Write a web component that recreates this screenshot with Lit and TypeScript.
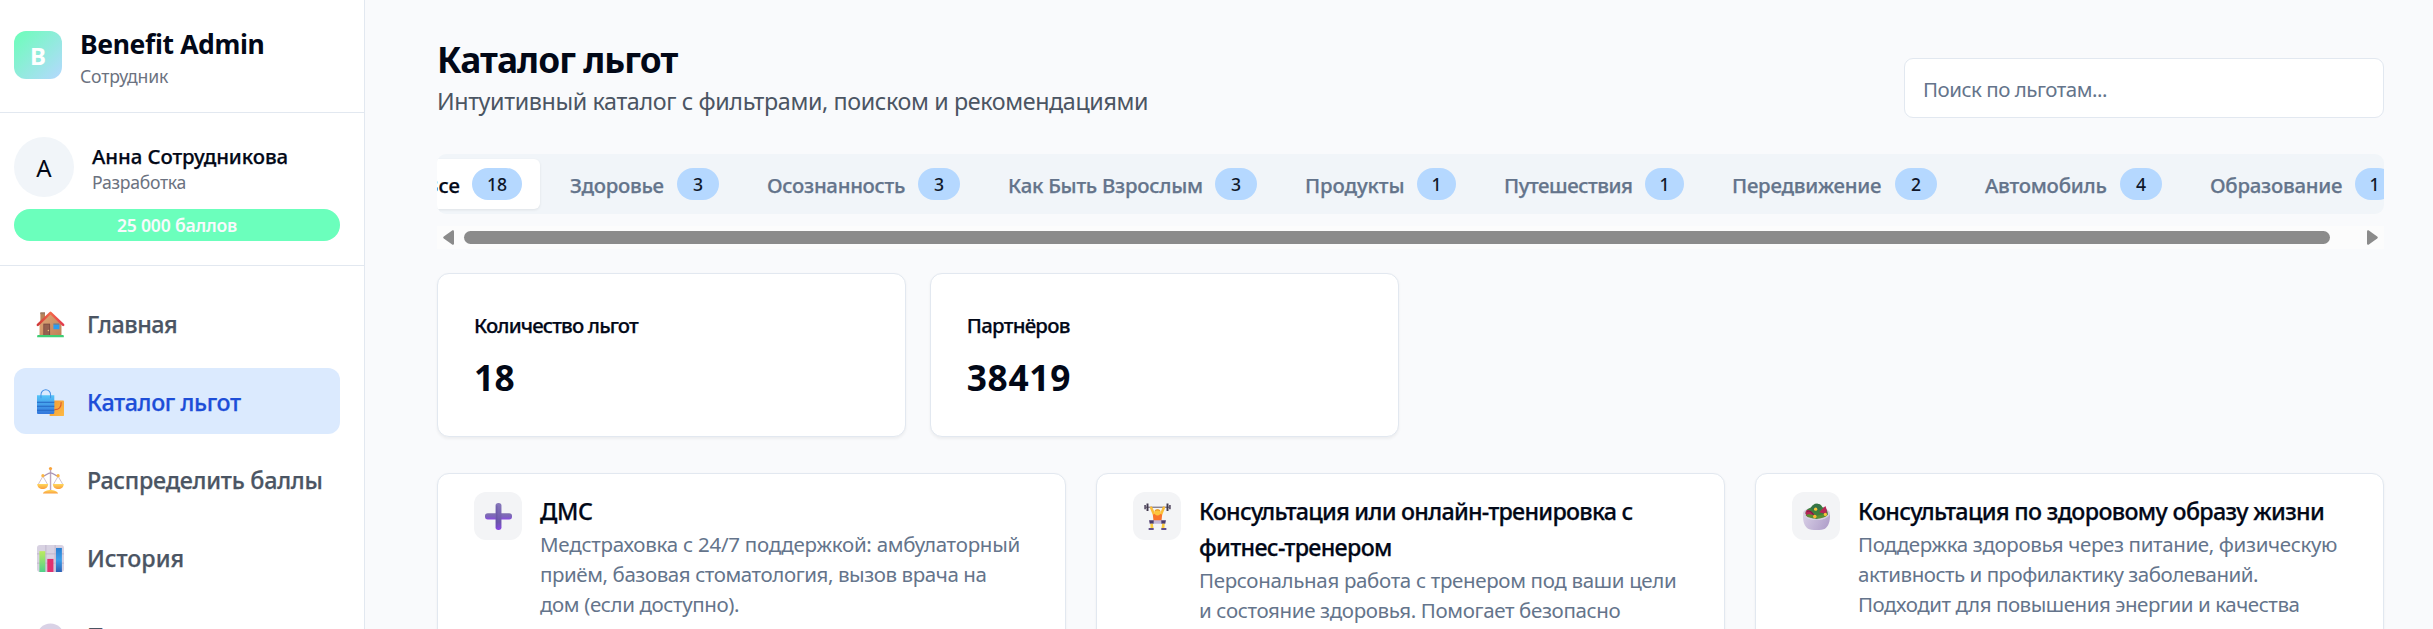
import { LitElement, html, css, svg, nothing } from "lit";
import { customElement, property } from "lit/decorators.js";
import { styleMap } from "lit/directives/style-map.js";

const FAMILY = '"Noto Sans", "Open Sans", sans-serif';
const pen = document.createElement("canvas").getContext("2d")!;

/** Letter spacing that sets a line of text to the given ink width. */
function tracking(text: string, weight: number, size: number, width: number) {
  pen.font = `${weight} ${size}px ${FAMILY}`;
  const m = pen.measureText(text);
  const natural = m.actualBoundingBoxLeft + m.actualBoundingBoxRight;
  return `${((width - natural) / (text.length - 1)).toFixed(3)}px`;
}

@customElement("text-line")
class TextLine extends LitElement {
  static styles = css`
    :host { display: block; white-space: nowrap; }
    .line { display: block; }
    .medium { -webkit-text-stroke: 0.25px currentColor; }
  `;
  @property() text = "";
  @property({ type: Number }) weight = 400;
  @property({ type: Number }) size = 20.5;
  @property({ type: Number }) ink = 0;
  render() {
    return html`<span
      class="line ${this.weight === 500 ? "medium" : ""}"
      style=${styleMap({
        fontWeight: String(this.weight),
        fontSize: `${this.size}px`,
        letterSpacing: this.ink ? tracking(this.text, this.weight, this.size, this.ink) : "normal",
      })}
    >${this.text}</span>`;
  }
}

const line = (cls: string, text: string, weight: number, size: number, ink: number) =>
  html`<text-line class=${cls} .text=${text} .weight=${weight} .size=${size} .ink=${ink}></text-line>`;

const icons: Record<string, unknown> = {
  house: svg`
    <defs><linearGradient id="hw" x1="0" x2="1" y2="1"><stop stop-color="#e0aa79"/><stop offset="1" stop-color="#bf7f56"/></linearGradient>
    <linearGradient id="hr" x1="0" x2="1"><stop stop-color="#cf3838"/><stop offset=".5" stop-color="#f4694a"/><stop offset="1" stop-color="#e2394c"/></linearGradient></defs>
    <path d="M4 2.2h5.5v12H4z" fill="#b98359"/><path d="M4 1.5h5.5v2.3H4z" fill="#9c7a62"/>
    <path d="M3 14.5 16 3l13 11.5V30H3z" fill="url(#hw)"/>
    <path d="M7.5 15h8v15h-8z" fill="#7c4b42"/><path d="M8.5 16h6v13h-6z" fill="#95604f"/><circle cx="13.5" cy="23" r=".9" fill="#f2c27b"/>
    <path d="M19.5 15h7v6.6h-7z" fill="#2b9df0"/><path d="M19.5 15h7v1h-7z" fill="#9a6a4e"/>
    <path d="M1 16.5 16 2.2 31 16.5" fill="none" stroke="url(#hr)" stroke-width="3" stroke-linejoin="round" stroke-linecap="round"/>
    <path d="M1.2 28.5h29.6a1 1 0 0 1 1 1V31H.2v-1.5a1 1 0 0 1 1-1z" fill="#3fce74"/>`,
  bags: svg`
    <defs><linearGradient id="bb" x2="0" y2="1"><stop stop-color="#55c4f8"/><stop offset="1" stop-color="#3377dc"/></linearGradient>
    <linearGradient id="bo" x2="1" y2="1"><stop stop-color="#f29a34"/><stop offset="1" stop-color="#fdb944"/></linearGradient></defs>
    <path d="M15 13.5h16a1 1 0 0 1 1 1V31a1 1 0 0 1-1 1H15z" fill="url(#bo)"/>
    <path d="M28.6 16c.3 6-2.600 8.500-7.600 8.500" fill="none" stroke="#dc5b2e" stroke-width="1.300" stroke-linecap="round"/>
    <path d="M0 7.500h20.500V28a1.500 1.500 0 0 1-1.500 1.500H1.200A1.200 1.200 0 0 1 0 28.300z" fill="url(#bb)"/>
    <path d="M0 15.800h20.500M0 20.500h20.500M0 25.300h20.500" stroke="#2366c4" stroke-width="1.200"/>
    <path d="M4.700 10.500V6.800a5.700 5.900 0 0 1 11.400 0v3.700" fill="none" stroke="#4590e6" stroke-width="1.200" stroke-linecap="round"/>`,
  scales: svg`
    <defs><linearGradient id="sp" x2="0" y2="1"><stop stop-color="#ffd95c"/><stop offset="1" stop-color="#f99d3d"/></linearGradient></defs>
    <path d="M15.200 3h1.700v25h-1.700z" fill="#bba5bd"/>
    <path d="M6.500 10.500c3.500 1 5.500-3.500 9.500-3.500s6 4.500 9.500 3.500" fill="none" stroke="#a993b5" stroke-width="1.600"/>
    <path d="M7 11 1.500 20.500M7 11l5.500 9.500M25 11l-5.500 9.500M25 11l5.500 9.500" stroke="#c7b5c6" stroke-width="1"/>
    <path d="M.3 20h12.900c0 3.600-2.700 6-6.400 6S.3 23.600.3 20zM18.800 20h12.900c0 3.600-2.700 6-6.400 6s-6.500-2.400-6.500-6z" fill="url(#sp)"/>
    <circle cx="16" cy="1.900" r="1.900" fill="#f8a43c"/><circle cx="7" cy="10.300" r="1.900" fill="#fbb542"/><circle cx="25" cy="10.300" r="1.900" fill="#fbb542"/>
    <path d="M7 31.500c.8-2.800 5-4.300 9-4.300s8.200 1.500 9 4.300z" fill="url(#sp)"/>`,
  chart: svg`
    <defs><linearGradient id="cg" x2="0" y2="1"><stop stop-color="#bdea60"/><stop offset="1" stop-color="#4fd18a"/></linearGradient>
    <linearGradient id="cb" x2="0" y2="1"><stop stop-color="#2a7fd2"/><stop offset=".5" stop-color="#3c9fea"/><stop offset="1" stop-color="#2a5fb4"/></linearGradient></defs>
    <rect width="32" height="32" rx="3.500" fill="#d8d2e2"/>
    <path d="M0 10.500h32M0 21.500h32M10.500 0v32M21.500 0v32" stroke="#bcb3c8" stroke-width="1"/>
    <path d="M2.800 7.300h7V32h-7z" fill="url(#cg)"/><path d="M12.200 16.500h7.300V32h-7.300z" fill="#e0306f"/><path d="M22.500 3.500h7V32h-7z" fill="url(#cb)"/>`,
  bubble: svg`<ellipse cx="16" cy="15" rx="15.500" ry="14.300" fill="#d9d2e6"/><path d="M4 22 1 31l10-3z" fill="#d9d2e6"/>`,
  plus: svg`
    <defs><linearGradient id="pl" gradientUnits="userSpaceOnUse" x1="0" x2="0" y1="12" y2="20"><stop stop-color="#8072ae"/><stop offset=".55" stop-color="#7d63bd"/><stop offset="1" stop-color="#8a45e8"/></linearGradient>
    <linearGradient id="pv" gradientUnits="userSpaceOnUse" x1="0" x2="0" y1="0" y2="32"><stop stop-color="#8778bb"/><stop offset=".7" stop-color="#6d57ab"/><stop offset="1" stop-color="#8a45e8"/></linearGradient></defs>
    <rect x="0" y="12" width="32" height="7.500" rx="3.300" fill="url(#pl)"/><rect x="12.500" y="0" width="7" height="32" rx="3.300" fill="url(#pv)"/>
    <path d="M14 3v26" stroke="#6350a0" stroke-width="1.200" opacity=".6"/>`,
  lifter: svg`
    <path d="M2 5h28" stroke="#6b6276" stroke-width="1.300"/>
    <path d="M3 .5h2.300v9H3zM26.700.5H29v9h-2.300z" fill="#433b4f"/><path d="M.3 2.500h2v5h-2zM29.700 2.500h2v5h-2z" fill="#5b5268"/>
    <path d="M8.500 5.500 12.500 15M23.500 5.500 19.500 15" stroke="#fbbd38" stroke-width="3" stroke-linecap="round"/>
    <path d="M10.500 14c2-1.500 9-1.500 11 0l-.8 7.500h-9.400z" fill="#f9742c"/>
    <circle cx="16" cy="11" r="3.700" fill="#fcc63f"/><path d="M12.500 10c.5-3.500 6.500-3.500 7 0-2-1.500-5-1.500-7 0z" fill="#e9952a"/>
    <path d="M10.500 20.500h11l-1.500 4h-8z" fill="#c4b7d6"/>
    <path d="M6 20.500h5.500v4H6.800zM20.500 20.500H26l-.8 4h-4.700z" fill="#4b3a6c"/>
    <path d="M7.500 24.500h3l.7 5H7.800zM21.500 24.500h3l-.3 5h-3.400z" fill="#fcca3e"/>
    <path d="M5.500 29.500h6V32h-6zM20.500 29.500h6V32h-6z" fill="#62508a"/>`,
  salad: svg`
    <defs><linearGradient id="sb" x2="1" y2=".3"><stop stop-color="#d8cfe6"/><stop offset="1" stop-color="#b3a3cc"/></linearGradient></defs>
    <ellipse cx="16" cy="12.500" rx="16" ry="7.500" fill="#d5cee0"/>
    <path d="M3 13C3 7 8 6 10 5c1-5 11-6 13 0 4 0 6.500 4 6.500 9L16 19z" fill="#3f7f3c"/>
    <path d="M9 6c2-3 4-2 5-5 4-1 8 1 8 5-2 4-9 4-13 0z" fill="#347346"/>
    <path d="M3.500 9.500c3-3 7 0 11 6l-8 1.500c-3-1.500-4-4-3-7.500zM19 11l7.500-7.500c1.200 2.500 2.500 6 1 9.500z" fill="#b72556"/>
    <path d="M5 10c3-1.500 6 1 8 5" fill="none" stroke="#7d1c43" stroke-width="1.300"/>
    <path d="M0 13c1 2 2 3 3 3.500 6 4.500 20 4.500 26 0 1-.5 2-1.500 3-3.500.3 10-2 14.500-6 17.500-3 2-17 2-20 0C2 27.500-.3 23 0 13z" fill="url(#sb)"/>
    <path d="M3 14.500c5 5.300 21 5.300 26 0l-4-1.500-9 2-9-2z" fill="#5a8f32"/>
    <circle cx="15" cy="7.300" r="2" fill="#f8c63a"/><circle cx="14" cy="16" r="2.100" fill="#fbb638"/><circle cx="26.500" cy="13.500" r="1.900" fill="#f8c63a"/>`,
};

@customElement("ui-glyph")
class UiGlyph extends LitElement {
  static styles = css`
    :host { display: block; flex: none; width: 27px; height: 27px; }
    svg { display: block; width: 100%; height: 100%; overflow: visible; }
  `;
  @property() name = "";
  render() {
    return html`<svg viewBox="0 0 32 32">${icons[this.name] ?? nothing}</svg>`;
  }
}

const nav: [string, string, number, boolean][] = [
  ["house", "Главная", 87, false],
  ["bags", "Каталог льгот", 152, true],
  ["scales", "Распределить баллы", 232.5, false],
  ["chart", "История", 93.5, false],
  ["bubble", "Поддержка", 122, false],
];

@customElement("side-bar")
class SideBar extends LitElement {
  static styles = css`
    :host { display: block; box-sizing: border-box; width: 365px; flex: none; background: #fff; border-right: 1px solid #e2e8f0; overflow: hidden; }
    .brand { display: flex; gap: 18px; padding: 24px 24px 24px 14px; height: 64px; border-bottom: 1px solid #e2e8f0; }
    .logo { width: 48px; height: 48px; margin-top: 7px; border-radius: 12px; background: linear-gradient(135deg, #6bffb8, #b5d8ff); color: #fff; font-weight: 700; font-size: 24px; line-height: 50px; text-align: center; }
    .name { padding-top: 2px; line-height: 36px; color: #020817; }
    .role { padding-top: 2px; line-height: 24px; color: #6b7280; }
    .profile { padding: 24px 24px 24px 14px; border-bottom: 1px solid #e2e8f0; }
    .who { display: flex; gap: 18px; height: 60px; }
    .avatar { width: 60px; border-radius: 50%; background: #f1f5f9; font-size: 24px; line-height: 62px; text-align: center; color: #020817; }
    .user { padding-top: 4px; line-height: 30px; color: #020817; }
    .dept { line-height: 22px; color: #6b7280; }
    .points { margin-top: 12px; height: 32px; border-radius: 16px; background: #6bffbc; color: #f8fafc; display: flex; justify-content: center; line-height: 32px; }
    nav { display: flex; flex-direction: column; gap: 12px; padding: 24px 24px 0 14px; }
    .item { display: flex; align-items: center; gap: 23px; height: 63px; padding: 3px 0 0 23px; border-radius: 12px; color: #4b5563; line-height: 36px; }
    .item text-line { margin-top: -1px; }
    .active { background: #dbeafe; color: #1d4ed8; }
  `;
  render() {
    return html`
      <div class="brand">
        <div class="logo">B</div>
        <div>${line("name", "Benefit Admin", 700, 26.500, 181.500)}${line("role", "Сотрудник", 400, 17.600, 88)}</div>
      </div>
      <div class="profile">
        <div class="who">
          <div class="avatar">А</div>
          <div>${line("user", "Анна Сотрудникова", 500, 20.400, 194.500)}${line("dept", "Разработка", 400, 17.600, 92.500)}</div>
        </div>
        <div class="points">${line("", "25 000 баллов", 600, 17.600, 120)}</div>
      </div>
      <nav>
        ${nav.map(([icon, text, ink, on]) => html`
          <div class="item ${on ? "active" : ""}"><ui-glyph name=${icon}></ui-glyph>${line("", text, 500, 23.300, ink)}</div>`)}
      </nav>`;
  }
}

/* label, box width, ink width, count, badge width */
const tabs: [string, number, number, number, number][] = [
  ["Все", 35, 33.500, 18, 50],
  ["Здоровье", 95, 93.500, 3, 42],
  ["Осознанность", 139, 137, 3, 42],
  ["Как Быть Взрослым", 195, 193, 3, 42],
  ["Продукты", 100, 97.500, 1, 39],
  ["Путешествия", 129, 127, 1, 39],
  ["Передвижение", 151, 148, 2, 42],
  ["Автомобиль", 123, 121.500, 4, 42],
  ["Образование", 133, 131, 1, 39],
];

@customElement("category-tabs")
class CategoryTabs extends LitElement {
  static styles = css`
    :host { display: block; }
    .bar { height: 60px; border-radius: 9px; background: #f1f5f9; overflow: hidden; }
    .row { display: flex; gap: 12px; align-items: center; height: 60px; margin-left: -30px; }
    .tab { flex: none; display: flex; gap: 12px; align-items: center; height: 50px; padding: 0 18px; border-radius: 6px; color: #64748b; line-height: 30px; }
    .tab text-line { padding-top: 2px; }
    .on { background: #fff; color: #020817; box-shadow: 0 1px 3px rgba(0, 0, 0, 0.08); }
    .count { height: 32px; line-height: 32px; border-radius: 16px; background: #b5d8ff; color: #0f172a; font-size: 17.600px; font-weight: 500; text-align: center; }
    .scroll { display: flex; align-items: center; height: 23px; margin-top: 12px; padding: 0 6px; background: #fcfcfc; }
    .scroll svg { flex: none; width: 11px; height: 15px; fill: #8b8b8b; }
    .thumb { flex: 1; height: 13px; border-radius: 6.500px; background: #8b8b8b; margin: 0 37px 1px 10px; }
  `;
  render() {
    return html`
      <div class="bar"><div class="row">
        ${tabs.map(([t, w, ink, n, bw], i) => html`
          <div class="tab ${i ? "" : "on"}">
            <text-line style=${styleMap({ width: `${w}px` })} .text=${t} .weight=${500} .size=${20.400} .ink=${ink}></text-line>
            <span class="count" style=${styleMap({ width: `${bw}px` })}>${n}</span>
          </div>`)}
      </div></div>
      <div class="scroll">
        <svg viewBox="0 0 11 15"><path d="M9.500.3Q11 0 11 1.500v12q0 1.500-1.500 1.200L.8 8.500q-1.200-1 0-2z"/></svg>
        <div class="thumb"></div>
        <svg viewBox="0 0 11 15"><path d="M1.500.3Q0 0 0 1.500v12q0 1.500 1.500 1.200l8.700-6.200q1.200-1 0-2z"/></svg>
      </div>`;
  }
}

type Row = [string, number];
const benefits: { icon: string; title: Row[]; text: Row[] }[] = [
  { icon: "plus", title: [["ДМС", 53]], text: [
    ["Медстраховка с 24/7 поддержкой: амбулаторный", 477.500],
    ["приём, базовая стоматология, вызов врача на", 444.500],
    ["дом (если доступно).", 199]] },
  { icon: "lifter", title: [["Консультация или онлайн-тренировка с", 431.500], ["фитнес-тренером", 191]], text: [
    ["Персональная работа с тренером под ваши цели", 475],
    ["и состояние здоровья. Помогает безопасно", 420.500]] },
  { icon: "salad", title: [["Консультация по здоровому образу жизни", 463]], text: [
    ["Поддержка здоровья через питание, физическую", 478],
    ["активность и профилактику заболеваний.", 400],
    ["Подходит для повышения энергии и качества", 439.500]] },
];

@customElement("app-root")
class AppRoot extends LitElement {
  static styles = css`
    :host { display: flex; height: 629px; overflow: hidden; background: #f9fafc; font-family: "Noto Sans", "Open Sans", sans-serif; }
    main { flex: 1; min-width: 0; padding: 37px 49px 0 72px; }
    header { display: flex; justify-content: space-between; align-items: flex-end; height: 81px; margin-bottom: 36px; }
    .title { line-height: 45px; color: #020817; }
    .sub { padding-top: 2px; line-height: 34px; color: #4b5563; }
    .search { box-sizing: border-box; width: 480px; height: 60px; padding: 1px 0 0 18px; border: 1px solid #e2e8f0; border-radius: 9px; background: #fff; color: #64748b; line-height: 58px; }
    .stats { display: grid; grid-template-columns: repeat(4, 1fr); gap: 24px; margin-top: 24px; }
    .card { box-sizing: border-box; background: #fff; border: 1px solid #e2e8f0; border-radius: 12px; box-shadow: 0 1.500px 3px rgba(0, 0, 0, 0.05); }
    .stat { height: 164px; padding: 36px; color: #020817; }
    .label { line-height: 30px; }
    .value { margin-top: 13px; line-height: 48px; }
    .grid { display: grid; grid-template-columns: repeat(3, 1fr); gap: 30px; margin-top: 36px; }
    .benefit { display: flex; gap: 18px; height: 300px; padding: 18px 36px; }
    .tile { flex: none; display: grid; place-items: center; width: 48px; height: 48px; border-radius: 12px; background: #f3f4f6; }
    .info { padding-top: 1px; }
    .head { line-height: 36px; color: #020817; }
    .text { line-height: 30px; color: #64748b; }
  `;
  render() {
    return html`
      <side-bar></side-bar>
      <main>
        <header>
          <div>
            ${line("title", "Каталог льгот", 700, 35.300, 238.500)}
            ${line("sub", "Интуитивный каталог с фильтрами, поиском и рекомендациями", 400, 23.300, 708)}
          </div>
          <div class="search">${line("", "Поиск по льготам...", 400, 20.500, 183)}</div>
        </header>
        <category-tabs></category-tabs>
        <section class="stats">
          <div class="card stat">${line("label", "Количество льгот", 500, 20.400, 164)}${line("value", "18", 700, 35.300, 37.500)}</div>
          <div class="card stat">${line("label", "Партнёров", 500, 20.400, 102)}${line("value", "38419", 700, 35.300, 101.500)}</div>
        </section>
        <section class="grid">
          ${benefits.map((b) => html`
            <article class="card benefit">
              <div class="tile"><ui-glyph name=${b.icon}></ui-glyph></div>
              <div class="info">
                ${b.title.map(([t, w]) => line("head", t, 500, 23.300, w))}
                ${b.text.map(([t, w]) => line("text", t, 400, 20.500, w))}
              </div>
            </article>`)}
        </section>
      </main>`;
  }
}
